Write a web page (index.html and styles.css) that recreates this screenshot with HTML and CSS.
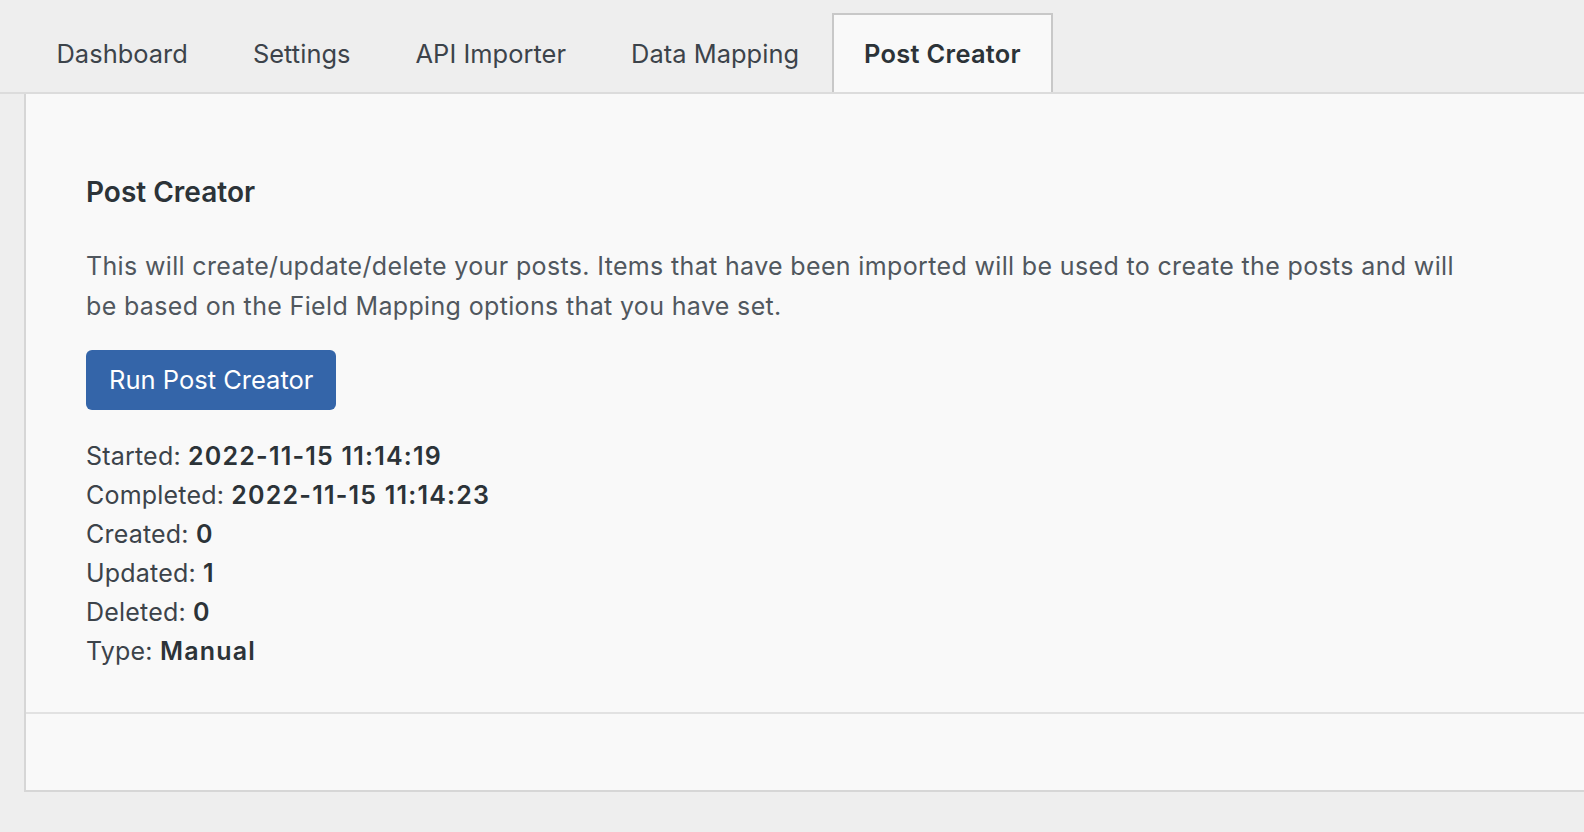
FILE: index.html
```html
<!DOCTYPE html>
<html lang="en">
<head>
    <meta charset="UTF-8">
    <meta name="viewport" content="width=device-width, initial-scale=1.0">
    <title>Post Creator</title>
    <link rel="stylesheet" href="styles.css">
</head>
<body>
    <nav class="tab-bar">
        <a class="tab" href="#">Dashboard</a>
        <a class="tab" href="#">Settings</a>
        <a class="tab" href="#">API Importer</a>
        <a class="tab" href="#">Data Mapping</a>
        <a class="tab tab-active" href="#">Post Creator</a>
    </nav>

    <div class="panel">
        <div class="panel-body">
            <h2 class="panel-title">Post Creator</h2>
            <p class="description">This will create/update/delete your posts. Items that have been imported will be used to create the posts and will be based on the Field Mapping options that you have set.</p>
            <button class="button-primary">Run Post Creator</button>
            <ul class="stats">
                <li>Started: <strong>2022-11-15 11:14:19</strong></li>
                <li>Completed: <strong>2022-11-15 11:14:23</strong></li>
                <li>Created: <strong>0</strong></li>
                <li>Updated: <strong>1</strong></li>
                <li>Deleted: <strong>0</strong></li>
                <li>Type: <strong>Manual</strong></li>
            </ul>
        </div>
        <div class="panel-footer"></div>
    </div>
</body>
</html>
```

FILE: styles.css
```css
body {
    margin: 0;
    background: #eeeeee;
    font-family: Inter, "Noto Sans", sans-serif;
    color: #3c434a;
    overflow: hidden;
}

.tab-bar {
    display: flex;
    padding: 13px 0 0 24px;
    border-bottom: 2px solid #dcdcdc;
}

.tab {
    display: block;
    height: 77px;
    line-height: 78px;
    padding: 0 30.5px;
    border: 2px solid transparent;
    border-bottom: none;
    font-size: 25.4px;
    letter-spacing: 0.05px;
    color: #3c434a;
    text-decoration: none;
}

.tab-active {
    background: #f9f9f9;
    border-color: #c8c8c8;
    font-weight: 600;
    letter-spacing: 0.3px;
    color: #2c3338;
}

.panel {
    margin-left: 24px;
    background: #f9f9f9;
    border-left: 2px solid #d6d6d6;
    border-bottom: 2px solid #d6d6d6;
}

.panel-body {
    padding: 80px 60px 41px;
    border-bottom: 2px solid #e2e2e2;
}

.panel-title {
    margin: 0 0 36px;
    font-size: 28px;
    line-height: 36px;
    font-weight: 600;
    color: #2c3338;
}

.description {
    margin: 0 0 24px;
    max-width: 1400px;
    font-size: 25px;
    line-height: 40px;
    letter-spacing: 0.35px;
    color: #50575e;
}

.button-primary {
    display: block;
    height: 60px;
    padding: 0 23px;
    border: none;
    border-radius: 6px;
    background: #3465a9;
    color: #fff;
    font-family: inherit;
    font-size: 25.5px;
    line-height: 60px;
}

.stats {
    list-style: none;
    margin: 27px 0 0;
    padding: 0;
    font-size: 25px;
    line-height: 39px;
    letter-spacing: 0.2px;
}

.stats strong {
    font-weight: 600;
    letter-spacing: 1.2px;
    color: #2c3338;
}

.panel-footer {
    height: 76px;
}
```
